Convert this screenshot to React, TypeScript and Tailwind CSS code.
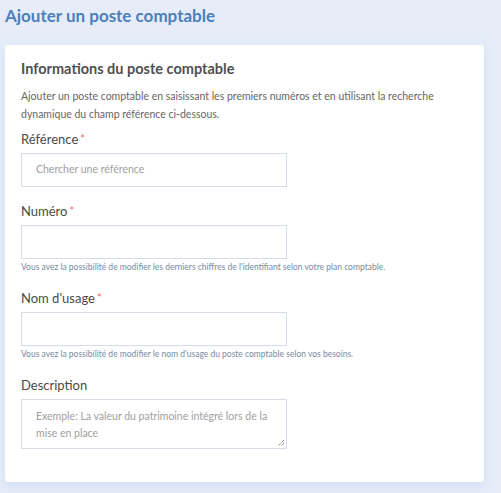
const font = { fontFamily: "Lato, 'Open Sans', sans-serif" };

function Label({ text, required }: { text: string; required?: boolean }) {
  return (
    <div className="text-[13px] leading-[16px] text-[#4a4a4a] mb-[6px]">
      {text}
      {required && <span className="text-[#f0646e] ml-[2px] align-top text-[11px]">*</span>}
    </div>
  );
}

export default function App() {
  return (
    <div className="min-h-[493px] w-[501px] bg-[#e6edf9] overflow-hidden" style={font}>
      <h1 className="pl-[5px] pt-[6px] text-[17px] leading-[20px] font-bold text-[#4b80bd]">
        Ajouter un poste comptable
      </h1>
      <div className="ml-[5px] mt-[19px] w-[479px] h-[437px] bg-white rounded-[3px] shadow-[0_4px_12px_rgba(160,180,230,0.25)] px-[16px] pt-[15px]">
        <h2 className="text-[14.5px] leading-[18px] font-bold text-[#505050]">
          Informations du poste comptable
        </h2>
        <p className="mt-[9px] w-[420px] text-[10.5px] leading-[18px] text-[#666]">
          Ajouter un poste comptable en saisissant les premiers numéros et en utilisant la recherche
          dynamique du champ référence ci-dessous.
        </p>

        <div className="mt-[8px]">
          <Label text="Référence" required />
          <div className="w-[266px] h-[34px] border border-[#d5dde8] flex items-center pl-[14px] text-[10.5px] text-[#a0a0a0]">
            Chercher une référence
          </div>
        </div>

        <div className="mt-[16px]">
          <Label text="Numéro" required />
          <div className="w-[266px] h-[34px] border border-[#d5dde8]" />
          <div className="mt-[2px] text-[8.5px] leading-[12px] text-[#7a8aa2]">
            Vous avez la possibilité de modifier les derniers chiffres de l'identifiant selon votre plan comptable.
          </div>
        </div>

        <div className="mt-[17px]">
          <Label text="Nom d'usage" required />
          <div className="w-[266px] h-[34px] border border-[#d5dde8]" />
          <div className="mt-[2px] text-[8.5px] leading-[12px] text-[#7a8aa2]">
            Vous avez la possibilité de modifier le nom d'usage du poste comptable selon vos besoins.
          </div>
        </div>

        <div className="mt-[17px]">
          <Label text="Description" />
          <div className="relative w-[266px] h-[50px] border border-[#d5dde8] px-[14px] pt-[8px] text-[10.5px] leading-[17px] text-[#a0a0a0]">
            Exemple: La valeur du patrimoine intégré lors de la mise en place
            <svg className="absolute right-[1px] bottom-[1px]" width="8" height="8" viewBox="0 0 8 8">
              <path d="M7 1 L1 7 M7 4 L4 7" stroke="#555" strokeWidth="1" strokeDasharray="1 1" />
            </svg>
          </div>
        </div>
      </div>
    </div>
  );
}
